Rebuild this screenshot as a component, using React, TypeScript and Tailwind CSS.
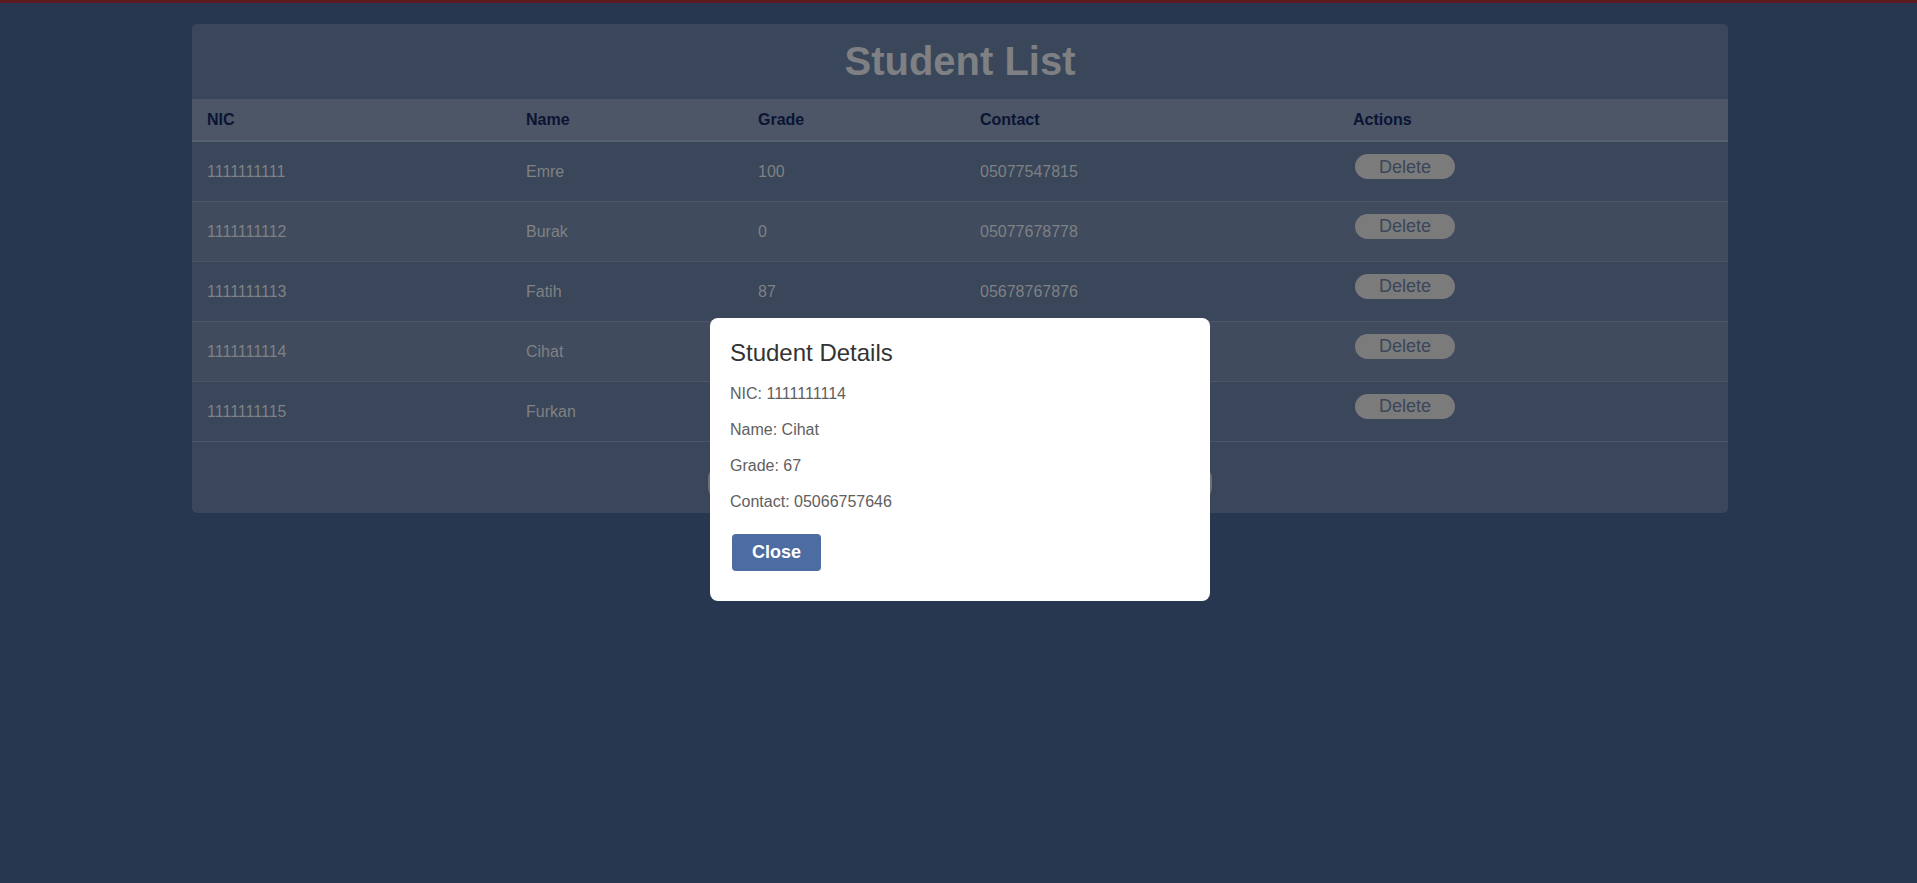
import React from "react";

const students = [
  { nic: "1111111111", name: "Emre", grade: "100", contact: "05077547815" },
  { nic: "1111111112", name: "Burak", grade: "0", contact: "05077678778" },
  { nic: "1111111113", name: "Fatih", grade: "87", contact: "05678767876" },
  { nic: "1111111114", name: "Cihat", grade: "67", contact: "05066757646" },
  { nic: "1111111115", name: "Furkan", grade: "", contact: "" },
];

export default function App() {
  return (
    <div
      className="relative min-h-screen bg-[#283750]"
      style={{ fontFamily: '"Liberation Sans", Arial, sans-serif' }}
    >
      <div className="h-[3px] bg-[#5c1c1e]" />
      <div className="pt-[21px]">
        <div className="ml-[192px] w-[1536px] rounded-[5px] bg-[#3a4659]">
          <div className="flex h-[75px] items-center justify-center pb-[2px]">
            <h1 className="text-[40px] font-bold leading-none text-[#7e8083]">Student List</h1>
          </div>
          <table className="w-full table-fixed border-collapse text-left">
            <thead>
              <tr className="h-[42px] border-b-2 border-[#56616f] bg-[#4c5667] text-[16px] font-bold text-[#0b1433]">
                <th className="w-[319px] pl-[15px] align-middle">NIC</th>
                <th className="w-[232px] pl-[15px] align-middle">Name</th>
                <th className="w-[222px] pl-[15px] align-middle">Grade</th>
                <th className="w-[373px] pl-[15px] align-middle">Contact</th>
                <th className="pl-[15px] align-middle">Actions</th>
              </tr>
            </thead>
            <tbody>
              {students.map((s, i) => (
                <tr
                  key={s.nic}
                  className={`h-[60px] border-b border-[#4b5668] text-[16px] text-[#7f8184] ${
                    i % 2 === 1 ? "bg-[#404b5d]" : "bg-[#3a4659]"
                  }`}
                >
                  <td className="pl-[15px] pt-[2px] align-middle">{s.nic}</td>
                  <td className="pl-[15px] pt-[2px] align-middle">{s.name}</td>
                  <td className="pl-[15px] pt-[2px] align-middle">{s.grade}</td>
                  <td className="pl-[15px] pt-[2px] align-middle">{s.contact}</td>
                  <td className="pl-[15px] pt-[12px] align-top">
                    <button className="ml-[2px] flex h-[25px] w-[100px] items-center justify-center rounded-full bg-[#7b7b7c] text-[18px] leading-none text-[#3a4659]">
                      Delete
                    </button>
                  </td>
                </tr>
              ))}
            </tbody>
          </table>
          <div className="flex h-[71px] justify-center pt-[23px]">
            <div className="h-[36px] w-[504px] rounded-[14px] bg-[#6f7072]" />
          </div>
        </div>
      </div>

      <div className="fixed inset-x-0 top-[318px] flex justify-center">
        <div className="ml-[3px] h-[283px] w-[500px] rounded-[8px] bg-white px-[20px] pt-[21px]">
          <h2 className="text-[24px] leading-[28px] text-[#333333]">Student Details</h2>
          <div className="mt-[17px] text-[16px] leading-[20px] text-[#606060]">
            <p className="mb-[16px]">NIC: 1111111114</p>
            <p className="mb-[16px]">Name: Cihat</p>
            <p className="mb-[16px]">Grade: 67</p>
            <p>Contact: 05066757646</p>
          </div>
          <button className="ml-[2px] mt-[22px] h-[37px] w-[89px] rounded-[4px] bg-[#4d6da2] text-[18px] font-bold text-white">
            Close
          </button>
        </div>
      </div>
    </div>
  );
}
